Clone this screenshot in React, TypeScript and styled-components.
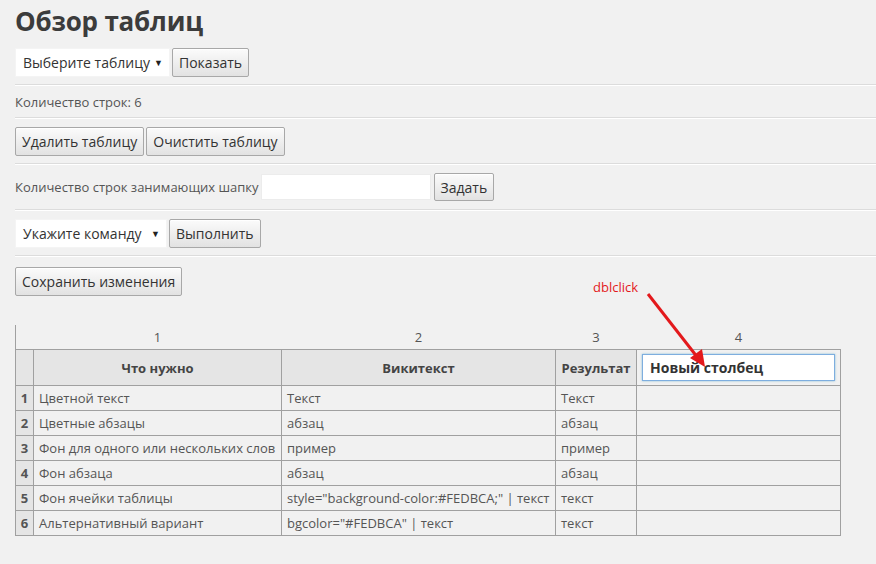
import React from "react";
import styled, { createGlobalStyle } from "styled-components";

const GlobalStyle = createGlobalStyle`
  html, body {
    margin: 0;
    padding: 0;
    background: #f1f1f1;
  }
  body {
    font-family: "Open Sans", "Noto Sans", sans-serif;
    color: #444;
  }
`;

const rows = [
  ["Цветной текст", "Текст", "Текст"],
  ["Цветные абзацы", "абзац", "абзац"],
  ["Фон для одного или нескольких слов", "пример", "пример"],
  ["Фон абзаца", "абзац", "абзац"],
  ["Фон ячейки таблицы", 'style="background-color:#FEDBCA;" | текст', "текст"],
  ["Альтернативный вариант", 'bgcolor="#FEDBCA" | текст', "текст"],
];

const App = () => {
  return (
    <>
      <GlobalStyle />
      <Page>
        <Title>Обзор таблиц</Title>

        <Section>
          <SelectBox width={155}>
            <span>Выберите таблицу</span>
            <Arrow>▼</Arrow>
          </SelectBox>
          <Button>Показать</Button>
        </Section>

        <Section short>
          <Note>Количество строк: 6</Note>
        </Section>

        <Section>
          <Button>Удалить таблицу</Button>
          <Button>Очистить таблицу</Button>
        </Section>

        <Section>
          <Label>Количество строк занимающих шапку</Label>
          <TextInput />
          <Button tall>Задать</Button>
        </Section>

        <Section>
          <SelectBox width={152}>
            <span>Укажите команду</span>
            <Arrow>▼</Arrow>
          </SelectBox>
          <Button>Выполнить</Button>
        </Section>

        <SaveRow>
          <Button>Сохранить изменения</Button>
        </SaveRow>

        <TableWrap>
          <Table>
            <colgroup>
              <col style={{ width: 18 }} />
              <col style={{ width: 248 }} />
              <col style={{ width: 274 }} />
              <col style={{ width: 81 }} />
              <col style={{ width: 204 }} />
            </colgroup>
            <thead>
              <tr>
                <IndexCell />
                <IndexCell>1</IndexCell>
                <IndexCell>2</IndexCell>
                <IndexCell>3</IndexCell>
                <IndexCell>4</IndexCell>
              </tr>
              <tr>
                <HeadCell />
                <HeadCell>Что нужно</HeadCell>
                <HeadCell>Викитекст</HeadCell>
                <HeadCell>Результат</HeadCell>
                <HeadCell edit>
                  <HeadInput defaultValue="Новый столбец" />
                </HeadCell>
              </tr>
            </thead>
            <tbody>
              {rows.map((r, i) => (
                <tr key={i}>
                  <NumCell>{i + 1}</NumCell>
                  <Cell>{r[0]}</Cell>
                  <Cell>{r[1]}</Cell>
                  <Cell>{r[2]}</Cell>
                  <Cell />
                </tr>
              ))}
            </tbody>
          </Table>

          <Hint>dblclick</Hint>
          <HintArrow width="80" height="90" viewBox="0 0 80 90">
            <line x1="6" y1="6" x2="56" y2="70" stroke="#e3191c" strokeWidth="3" />
            <polygon points="63,79 48,70 60,61" fill="#e3191c" />
          </HintArrow>
        </TableWrap>
      </Page>
    </>
  );
};

const Page = styled.div`
  padding-left: 15px;
  position: relative;
`;

const Title = styled.h1`
  margin: 0;
  height: 37px;
  padding-top: 3px;
  font-size: 26px;
  line-height: 37px;
  letter-spacing: -0.2px;
  font-weight: 700;
  color: #3c3c3c;
`;

const Section = styled.div<{ short?: boolean }>`
  display: flex;
  align-items: center;
  gap: 2px;
  height: ${(p) => (p.short ? 31 : 44)}px;
  border-bottom: 1px solid #dcdcdc;
  box-shadow: 0 1px 0 #fff;
  margin-bottom: 1px;
`;

const SelectBox = styled.div<{ width: number }>`
  box-sizing: border-box;
  width: ${(p) => p.width}px;
  height: 29px;
  margin-top: 1px;
  padding: 0 6px 0 7px;
  background: #fff;
  border: 1px solid #f4f4f4;
  display: flex;
  align-items: center;
  justify-content: space-between;
  font-size: 14px;
  color: #333;
`;

const Arrow = styled.span`
  font-size: 9px;
  color: #222;
`;

const Button = styled.button<{ tall?: boolean }>`
  box-sizing: border-box;
  height: ${(p) => (p.tall ? 28 : 29)}px;
  padding: 0 6px;
  font-family: "Open Sans", "Noto Sans", sans-serif;
  font-size: 14px;
  color: #333;
  background: linear-gradient(#fbfbfb, #e2e2e2);
  border: 1px solid #a8a8a8;
  border-radius: 2px;
  box-shadow: inset 0 1px 0 #fff;
`;

const Note = styled.span`
  font-size: 13px;
  color: #555;
`;

const Label = styled.span`
  font-size: 13px;
  color: #555;
`;

const TextInput = styled.input`
  box-sizing: border-box;
  width: 170px;
  height: 26px;
  margin: 0 1px 0 0;
  border: 1px solid #ececec;
  background: #fff;
`;

const SaveRow = styled.div`
  padding-top: 10px;
`;

const TableWrap = styled.div`
  position: relative;
  margin-top: 29px;
`;

const Table = styled.table`
  border-collapse: collapse;
  table-layout: fixed;
  width: 826px;
  font-size: 13px;
  color: #555;
  border-left: 1px solid #a0a0a0;
`;

const IndexCell = styled.th`
  height: 24px;
  padding: 0;
  font-weight: 400;
  text-align: center;
  color: #555;
`;

const HeadCell = styled.th<{ edit?: boolean }>`
  height: 35px;
  padding: ${(p) => (p.edit ? "0 5px" : "0 4px")};
  background: ${(p) => (p.edit ? "#f1f1f1" : "#e5e5e5")};
  border: 1px solid #a0a0a0;
  font-weight: 700;
  color: #444;
  text-align: center;
  white-space: nowrap;
`;

const HeadInput = styled.input`
  box-sizing: border-box;
  width: 100%;
  height: 27px;
  padding: 0 7px;
  border: 1px solid #7eaedf;
  box-shadow: 0 0 2px rgba(30, 140, 190, 0.5);
  background: #fff;
  font-family: "Open Sans", "Noto Sans", sans-serif;
  font-size: 14px;
  font-weight: 700;
  color: #333;
  outline: none;
`;

const Cell = styled.td`
  height: 24px;
  padding: 0 5px;
  border: 1px solid #a0a0a0;
  white-space: nowrap;
  overflow: hidden;
`;

const NumCell = styled(Cell)`
  padding: 0;
  text-align: center;
  font-weight: 700;
  background: #e5e5e5;
`;

const Hint = styled.span`
  position: absolute;
  left: 578px;
  top: -47px;
  font-size: 13px;
  color: #e3191c;
`;

const HintArrow = styled.svg`
  position: absolute;
  left: 627px;
  top: -37px;
`;

export default App;
